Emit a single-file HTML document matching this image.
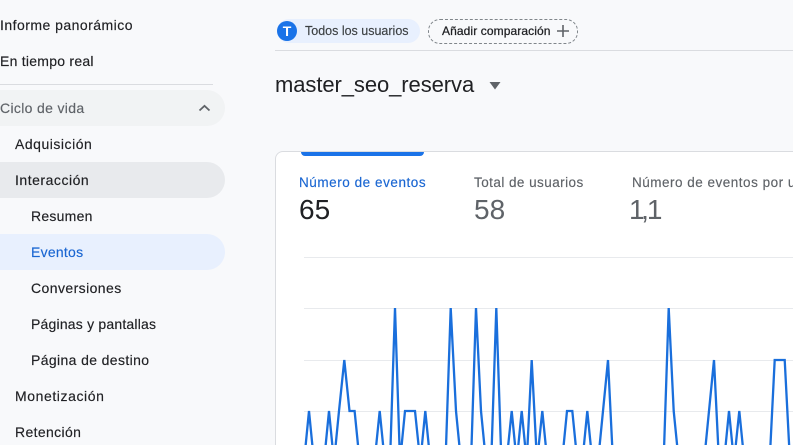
<!DOCTYPE html>
<html><head><meta charset="utf-8"><style>
html,body{margin:0;padding:0;width:793px;height:445px;overflow:hidden;background:#f8f9fb}
body{position:relative;font-family:"Liberation Sans",sans-serif;color:#202124}
.t{position:absolute;white-space:nowrap;font-size:14px;line-height:20px;letter-spacing:.25px;-webkit-text-stroke:.15px currentColor}
.b{position:absolute}
</style></head><body>
<div class="t" style="left:0;top:15px;letter-spacing:.47px">Informe panorámico</div>
<div class="t" style="left:0;top:51px">En tiempo real</div>
<div class="b" style="left:0;top:84px;width:213px;height:1px;background:#dadce0"></div>
<div class="b" style="left:0;top:90px;width:225px;height:36px;background:#f1f3f4;border-radius:0 18px 18px 0"></div>
<div class="t" style="left:0;top:98px;color:#5f6368;letter-spacing:.33px">Ciclo de vida</div>
<svg class="b" style="left:197px;top:102px" width="16" height="12"><path d="M2.5 8.5L7.5 3.8L12.5 8.5" fill="none" stroke="#5f6368" stroke-width="1.8"/></svg>
<div class="t" style="left:15px;top:134px;letter-spacing:.52px">Adquisición</div>
<div class="b" style="left:0;top:162px;width:225px;height:36px;background:#e8eaed;border-radius:0 18px 18px 0"></div>
<div class="t" style="left:15px;top:170px;letter-spacing:.52px">Interacción</div>
<div class="t" style="left:31px;top:206px">Resumen</div>
<div class="b" style="left:0;top:234px;width:225px;height:36px;background:#e8f0fe;border-radius:0 18px 18px 0"></div>
<div class="t" style="left:31px;top:242px;color:#1a66d2">Eventos</div>
<div class="t" style="left:31px;top:278px;letter-spacing:.42px">Conversiones</div>
<div class="t" style="left:31px;top:314px;letter-spacing:.2px">Páginas y pantallas</div>
<div class="t" style="left:31px;top:350px;letter-spacing:.37px">Página de destino</div>
<div class="t" style="left:15px;top:386px;letter-spacing:.58px">Monetización</div>
<div class="t" style="left:15px;top:422px;letter-spacing:.36px">Retención</div>

<div class="b" style="left:277px;top:19px;width:143px;height:24px;background:#e8f0fe;border-radius:12px"></div>
<div class="b" style="left:277px;top:21px;width:20px;height:20px;background:#1a73e8;border-radius:50%;color:#fff;font-size:14px;font-weight:bold;line-height:20px;text-align:center">T</div>
<div class="t" style="left:305px;top:21px;font-size:12.5px;color:#3c4043;letter-spacing:0">Todos los usuarios</div>
<div class="b" style="left:428px;top:19px;width:148px;height:23px;border:1px dashed #80868b;border-radius:12px"></div>
<div class="t" style="left:442px;top:21px;font-size:12px;letter-spacing:.1px;-webkit-text-stroke:.25px currentColor">Añadir comparación</div>
<svg class="b" style="left:556px;top:24px" width="14" height="14"><path d="M7 1V13M1 7H13" stroke="#5f6368" stroke-width="1.6" fill="none"/></svg>
<div class="b" style="left:275px;top:50px;width:518px;height:1px;background:#dadce0"></div>
<div class="t" style="left:275px;top:70px;font-size:22px;line-height:30px;letter-spacing:-.08px;-webkit-text-stroke:0">master_seo_reserva</div>
<svg class="b" style="left:488px;top:81px" width="14" height="10"><path d="M1.5 1H12.5L7 8.5Z" fill="#5f6368"/></svg>

<div class="b" style="left:275px;top:151px;width:530px;height:310px;background:#fff;border:1px solid #dadce0;border-radius:8px;box-sizing:border-box"></div>
<div class="b" style="left:301px;top:152px;width:123px;height:4px;background:#1a73e8;border-radius:0 0 4px 4px"></div>
<div class="t" style="left:299px;top:173px;font-size:13.5px;color:#1a66d2;letter-spacing:.55px">Número de eventos</div>
<div class="t" style="left:474px;top:173px;font-size:13.5px;color:#5f6368;letter-spacing:.45px">Total de usuarios</div>
<div class="t" style="left:632px;top:173px;font-size:13.5px;color:#5f6368;letter-spacing:.5px">Número de eventos por u</div>
<div class="t" style="left:299px;top:193px;font-size:28px;line-height:34px;letter-spacing:0;-webkit-text-stroke:0">65</div>
<div class="t" style="left:474px;top:193px;font-size:28px;line-height:34px;letter-spacing:0;color:#5f6368;-webkit-text-stroke:0">58</div>
<div class="t" style="left:629px;top:193px;font-size:28px;line-height:34px;color:#5f6368;-webkit-text-stroke:0"><span style="letter-spacing:-3.5px">1</span><span style="letter-spacing:-2px">,</span><span style="letter-spacing:0">1</span></div>

<svg class="b" style="left:0;top:0" width="793" height="445">
<path d="M304 257.5H793M304 308.5H793M304 360.5H793M304 411.5H793" stroke="#e8eaed" stroke-width="1" fill="none"/>
<polyline fill="none" stroke="#1a6fdc" stroke-width="2.3" stroke-linejoin="miter" points="304,462 309,411 314,462 324,462 329,411 334,462 339,411 344.3,360 349.5,411 354.6,411 359.7,462 374.5,462 379.7,411 384.8,462 390,462 395,308 400,462 405,411 415,411 420.3,462 425.3,411 430.4,462 445.5,462 450.7,308 456,411 461,462 471,462 476,308 481,411 486,462 491.2,462 496.3,308 501.4,462 506.5,462 511.7,411 516.7,462 521.7,411 526.7,462 531.7,360 537,462 542.3,411 547.4,462 562,462 567,411 572.3,411 577.4,462 582.3,462 587.3,411 592.4,462 598,462 603,411 608,360 613,462 663.6,462 668.7,308 673.7,411 678.8,462 704,462 709,411 714,360 719,462 724,462 729,411 734,462 739.3,411 744.4,462 769.6,462 774.7,360 784.7,360 790,462 793,462"/>
</svg>
</body></html>
